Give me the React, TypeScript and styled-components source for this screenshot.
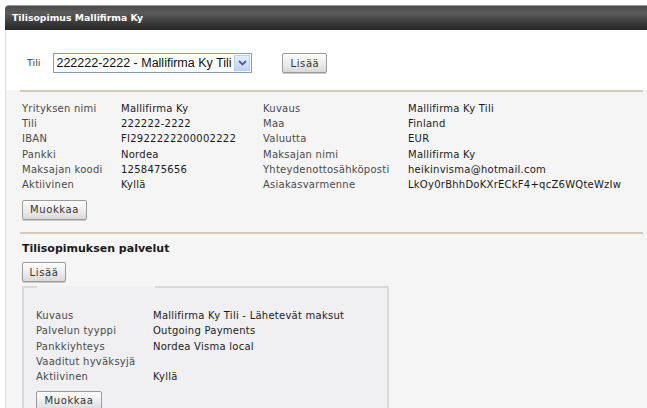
import styled, { createGlobalStyle } from "styled-components";

const GlobalStyle = createGlobalStyle`
  body {
    margin: 0;
    background: #fff;
    font-family: "DejaVu Sans", Verdana, sans-serif;
  }
`;

const Page = styled.div`
  padding: 5px 0 0 5px;
  width: 642px;
  height: 403px;
  overflow: hidden;
`;

const TitleBar = styled.header`
  height: 25px;
  line-height: 24px;
  padding-left: 7px;
  border-top: 1px solid #9a9a9a;
  border-top-left-radius: 4px;
  background: linear-gradient(180deg, #4c4c4c 0%, #5a5a5a 30%, #3a3a3a 70%, #262626 100%);
  color: #fff;
  font-size: 9.3px;
  font-weight: 700;
  box-sizing: border-box;
`;

const Panel = styled.section`
  border-left: 1px solid #dcdcdc;
  background: #f5f5f5;
  height: 100%;
`;

const TopSection = styled.div`
  background: #fff;
  padding: 23px 0 0 21px;
  height: 60px;
  box-sizing: border-box;
  display: flex;
  align-items: flex-start;
`;

const Label = styled.span`
  font-size: 9.5px;
  color: #444;
  line-height: 20px;
  margin-right: 13px;
`;

const SelectBox = styled.div`
  width: 199px;
  height: 20px;
  box-sizing: border-box;
  border: 1px solid #7f9db9;
  background: #fff;
  display: flex;
  align-items: center;
  font-family: "Liberation Sans", Arial, sans-serif;
  font-size: 12.5px;
  color: #111;
  padding-left: 2px;
  margin-right: 30px;
`;

const SelectText = styled.span`
  flex: 1;
  white-space: nowrap;
  overflow: hidden;
`;

const Arrow = styled.span`
  width: 16px;
  height: 16px;
  margin-right: 1px;
  background: linear-gradient(180deg, #e6eefc, #c1d3fb);
  border: 1px solid #b9cbf2;
  box-sizing: border-box;
  display: flex;
  align-items: center;
  justify-content: center;
`;

const Button = styled.button<{ $w: number }>`
  width: ${(p) => p.$w}px;
  height: 20px;
  padding: 0;
  border: 1px solid #9b9b9b;
  border-radius: 2px;
  background: linear-gradient(180deg, #fdfdfd 0%, #ececec 55%, #d9d9d9 100%);
  font-family: "DejaVu Sans", Verdana, sans-serif;
  font-size: 10px;
  color: #333;
  letter-spacing: 0.6px;
  box-shadow: 0 1px 0 #c8c8c8;
`;

const Rule = styled.hr`
  margin: 0 0 0 14px;
  width: 623px;
  border: 0;
  border-top: 2px solid #d3cabb;
  height: 0;
`;

const InfoSection = styled.div`
  padding: 9px 0 0 16px;
`;

const InfoGrid = styled.div`
  display: grid;
  grid-template-columns: 99px 142px 145px auto;
  font-size: 10px;
  line-height: 15.2px;
  letter-spacing: 0.25px;
  margin-bottom: 6px;
`;

const Key = styled.span`
  color: #4a4a4a;
  white-space: nowrap;
`;

const Value = styled.span`
  color: #1a1a1a;
  white-space: nowrap;
`;

const Spacer = styled.div`
  height: 12px;
`;

const Services = styled.div`
  padding: 8px 0 0 16px;
`;

const Heading = styled.h3`
  margin: 0 0 5px;
  font-size: 11px;
  line-height: 14px;
  font-weight: 700;
  color: #1a1a1a;
`;

const ServiceBox = styled.fieldset`
  margin: 4px 0 0;
  width: 367px;
  box-sizing: border-box;
  border: 2px solid #d9d9d9;
  border-bottom: 0;
  padding: 20px 12px 0 12px;
  background: #f0f0f2;
  height: 140px;
`;

const Blank = styled.legend`
  width: 118px;
  padding: 0;
  margin-left: 1px;
  font-size: 1px;
`;

const ServiceGrid = styled.div`
  display: grid;
  grid-template-columns: 117px auto;
  font-size: 10px;
  line-height: 15.2px;
  letter-spacing: 0.25px;
  margin-bottom: 5px;
`;

const info: [string, string, string, string][] = [
  ["Yrityksen nimi", "Mallifirma Ky", "Kuvaus", "Mallifirma Ky Tili"],
  ["Tili", "222222-2222", "Maa", "Finland"],
  ["IBAN", "FI2922222200002222", "Valuutta", "EUR"],
  ["Pankki", "Nordea", "Maksajan nimi", "Mallifirma Ky"],
  ["Maksajan koodi", "1258475656", "Yhteydenottosähköposti", "heikinvisma@hotmail.com"],
  ["Aktiivinen", "Kyllä", "Asiakasvarmenne", "LkOy0rBhhDoKXrECkF4+qcZ6WQteWzIw"],
];

const service: [string, string][] = [
  ["Kuvaus", "Mallifirma Ky Tili - Lähetevät maksut"],
  ["Palvelun tyyppi", "Outgoing Payments"],
  ["Pankkiyhteys", "Nordea Visma local"],
  ["Vaaditut hyväksyjä", ""],
  ["Aktiivinen", "Kyllä"],
];

export default function App() {
  return (
    <>
      <GlobalStyle />
      <Page>
        <TitleBar>Tilisopimus Mallifirma Ky</TitleBar>
        <Panel>
          <TopSection>
            <Label>Tili</Label>
            <SelectBox>
              <SelectText>222222-2222 - Mallifirma Ky Tili</SelectText>
              <Arrow>
                <svg width="9" height="6" viewBox="0 0 9 6">
                  <path d="M1 1 L4.5 4.5 L8 1" fill="none" stroke="#4d6185" strokeWidth="1.8" />
                </svg>
              </Arrow>
            </SelectBox>
            <Button $w={45}>Lisää</Button>
          </TopSection>
          <Rule />
          <InfoSection>
            <InfoGrid>
              {info.map((r) => (
                <>
                  <Key>{r[0]}</Key>
                  <Value>{r[1]}</Value>
                  <Key>{r[2]}</Key>
                  <Value>{r[3]}</Value>
                </>
              ))}
            </InfoGrid>
            <Button $w={65}>Muokkaa</Button>
          </InfoSection>
          <Spacer />
          <Rule />
          <Services>
            <Heading>Tilisopimuksen palvelut</Heading>
            <Button $w={44}>Lisää</Button>
            <ServiceBox>
              <Blank>&nbsp;</Blank>
              <ServiceGrid>
                {service.map((r) => (
                  <>
                    <Key>{r[0]}</Key>
                    <Value>{r[1]}</Value>
                  </>
                ))}
              </ServiceGrid>
              <Button $w={66}>Muokkaa</Button>
            </ServiceBox>
          </Services>
        </Panel>
      </Page>
    </>
  );
}
